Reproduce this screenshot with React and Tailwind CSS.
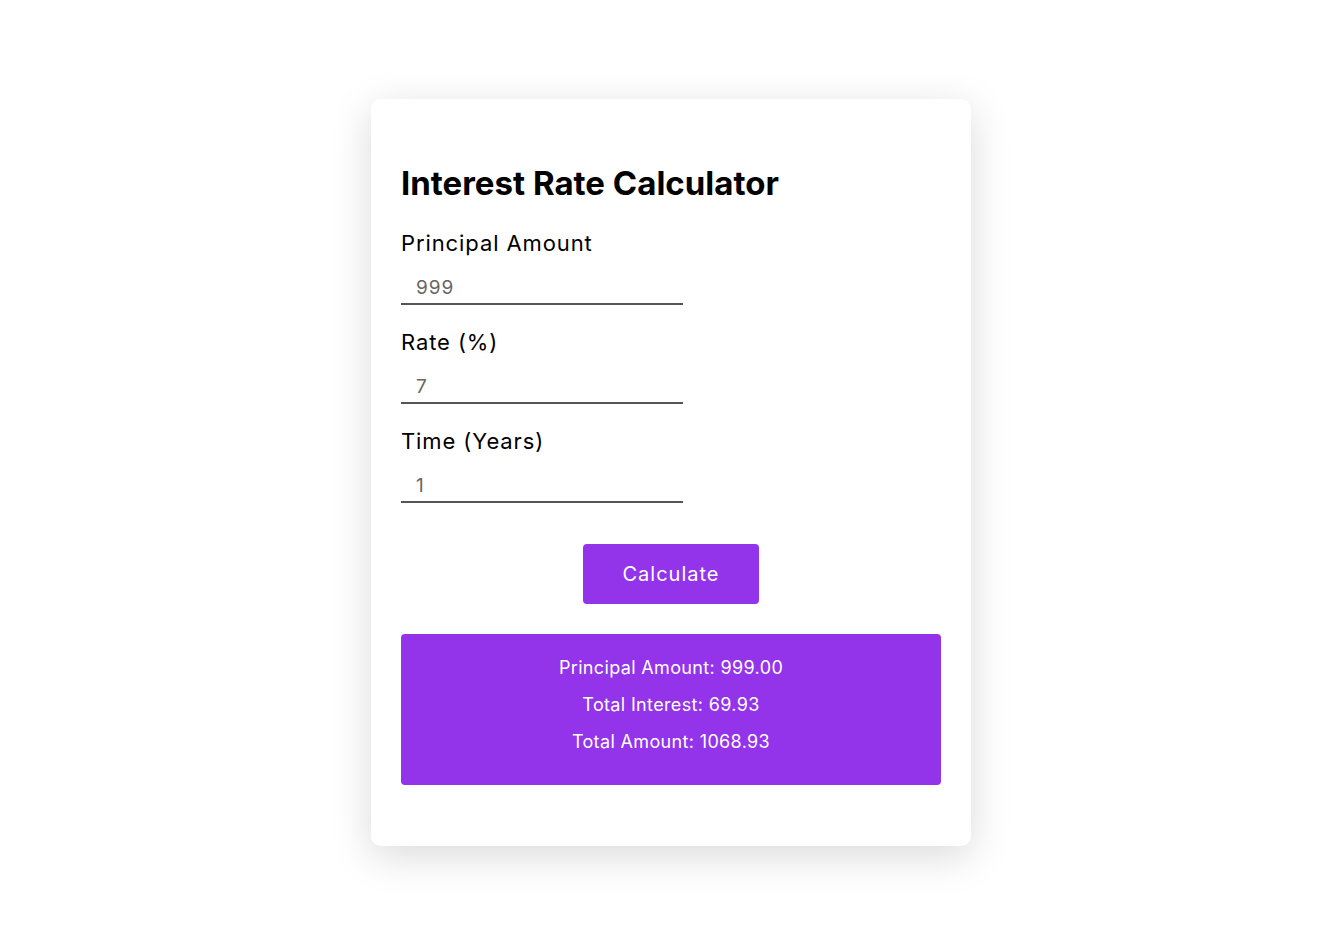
import React, { useState } from 'react';

const FIELDS = [
  { id: 'principal', label: 'Principal Amount' },
  { id: 'rate', label: 'Rate (%)' },
  { id: 'time', label: 'Time (Years)' },
];

export default function App() {
  const [values, setValues] = useState({ principal: '999', rate: '7', time: '1' });
  const [result, setResult] = useState({ principal: 999, interest: 69.93, total: 1068.93 });

  function calculate() {
    const p = parseFloat(values.principal) || 0;
    const r = parseFloat(values.rate) || 0;
    const t = parseFloat(values.time) || 0;
    const interest = (p * r * t) / 100;
    setResult({ principal: p, interest, total: p + interest });
  }

  return (
    <div
      className="flex min-h-screen items-center justify-center bg-white text-black"
      style={{ fontFamily: 'Inter, "Open Sans", sans-serif' }}
    >
      <div className="w-[600px] rounded-[10px] bg-white px-[30px] pt-[30px] pb-[61px] shadow-[0_10px_40px_rgba(0,0,0,0.15)]">
        <h2 className="mt-[30px] text-[33px] leading-[48px] font-bold">
          Interest Rate Calculator
        </h2>
        <div className="mt-[21px] flex flex-col gap-[22px]">
          {FIELDS.map((f) => (
            <div key={f.id} className="flex flex-col">
              <label htmlFor={f.id} className="text-[22px] leading-[30px] tracking-[0.9px]">
                {f.label}
              </label>
              <input
                id={f.id}
                type="text"
                value={values[f.id]}
                onChange={(e) => setValues({ ...values, [f.id]: e.target.value })}
                className="mt-[10px] h-[37px] w-[282px] border-b-2 border-[#555] px-[15px] pt-[4px] text-[19px] tracking-[1px] text-[#666] outline-none"
              />
            </div>
          ))}
        </div>
        <div className="mt-[41px] flex justify-center">
          <button
            type="button"
            onClick={calculate}
            className="h-[60px] w-[176px] rounded-[4px] bg-[#9333ea] text-[20px] tracking-[1px] text-white"
          >
            Calculate
          </button>
        </div>
        <div className="mt-[30px] flex flex-col gap-[10px] rounded-[4px] bg-[#9333ea] pt-[20px] pb-[30px] text-center text-[18px] leading-[27px] tracking-[0.35px] text-white">
          <p>Principal Amount: {result.principal.toFixed(2)}</p>
          <p>Total Interest: {result.interest.toFixed(2)}</p>
          <p>Total Amount: {result.total.toFixed(2)}</p>
        </div>
      </div>
    </div>
  );
}
